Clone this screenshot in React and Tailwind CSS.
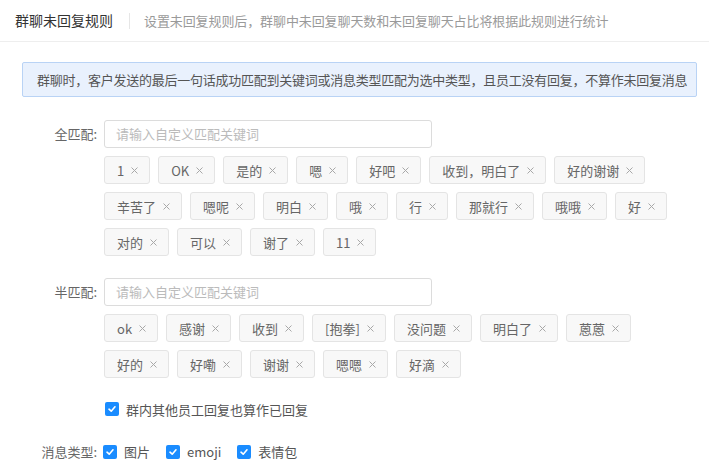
import React from 'react';

const font = { fontFamily: '"Noto Sans CJK SC", "Noto Sans", sans-serif' };

const fullTags = ['1', 'OK', '是的', '嗯', '好吧', '收到，明白了', '好的谢谢', '辛苦了', '嗯呢', '明白', '哦', '行', '那就行', '哦哦', '好', '对的', '可以', '谢了', '11'];
const halfTags = ['ok', '感谢', '收到', '[抱拳]', '没问题', '明白了', '蒽蒽', '好的', '好嘞', '谢谢', '嗯嗯', '好滴'];

function Tag({ text }) {
  return (
    <div className="h-[28px] pl-[12px] pr-[11px] flex items-center border border-[#e4e4e4] bg-[#f8f8f8] rounded-[3px] text-[13px] text-[#666]">
      <span className="leading-none">{text}</span>
      <svg className="ml-[7px]" width="7" height="7" viewBox="0 0 7 7" fill="none">
        <path d="M0.5 0.5 L6.5 6.5 M6.5 0.5 L0.5 6.5" stroke="#a8a8a8" strokeWidth="1" />
      </svg>
    </div>
  );
}

function Check({ label }) {
  return (
    <div className="flex items-center">
      <div className="w-[14px] h-[14px] rounded-[2px] bg-[#1a8cff] flex items-center justify-center">
        <svg width="10" height="10" viewBox="0 0 10 10" fill="none">
          <path d="M2 5.2 L4.2 7.2 L8 2.8" stroke="white" strokeWidth="1.6" strokeLinecap="round" strokeLinejoin="round" />
        </svg>
      </div>
      <span className="ml-[7px] text-[13px] text-[#555] leading-none">{label}</span>
    </div>
  );
}

function MatchRow({ label, tags }) {
  return (
    <div className="flex">
      <div className="w-[104px] pr-[7px] h-[28px] flex items-center justify-end text-[13px] text-[#666]">{label}</div>
      <div className="flex-1 mr-[12px]">
        <div className="w-[328px] h-[28px] border border-[#dcdcdc] rounded-[3px] flex items-center px-[11px] text-[13px] text-[#bbb]">
          请输入自定义匹配关键词
        </div>
        <div className="mt-[8px] flex flex-wrap gap-x-[8px] gap-y-[8px]">
          {tags.map((t, i) => <Tag key={i} text={t} />)}
        </div>
      </div>
    </div>
  );
}

export default function App() {
  return (
    <div className="w-[709px] h-[462px] bg-white overflow-hidden" style={font}>
      <div className="h-[42px] px-[15px] flex items-center border-b border-[#eeeeee]">
        <span className="text-[14px] text-[#333]">群聊未回复规则</span>
        <div className="w-px h-[16px] bg-[#e6e6e6] ml-[16px] mr-[14px]" />
        <span className="text-[13px] text-[#9a9a9a] tracking-[-0.1px]">设置未回复规则后，群聊中未回复聊天数和未回复聊天占比将根据此规则进行统计</span>
      </div>
      <div className="mt-[20px] ml-[22px] mr-[12px] h-[35px] border border-[#b9d3f5] bg-[#e9f1fd] rounded-[2px] flex items-center pl-[14px] pr-[8px] text-[13px] text-[#555] whitespace-nowrap tracking-[-0.25px]">
        群聊时，客户发送的最后一句话成功匹配到关键词或消息类型匹配为选中类型，且员工没有回复，不算作未回复消息
      </div>
      <div className="mt-[23px]">
        <MatchRow label="全匹配:" tags={fullTags} />
      </div>
      <div className="mt-[22px]">
        <MatchRow label="半匹配:" tags={halfTags} />
      </div>
      <div className="mt-[24px] ml-[105px]">
        <Check label="群内其他员工回复也算作已回复" />
      </div>
      <div className="mt-[26px] flex items-center">
        <div className="w-[104px] pr-[7px] text-right text-[13px] text-[#666]">消息类型:</div>
        <div className="flex items-center gap-[16px] -ml-px">
          <Check label="图片" />
          <Check label="emoji" />
          <Check label="表情包" />
        </div>
      </div>
    </div>
  );
}
